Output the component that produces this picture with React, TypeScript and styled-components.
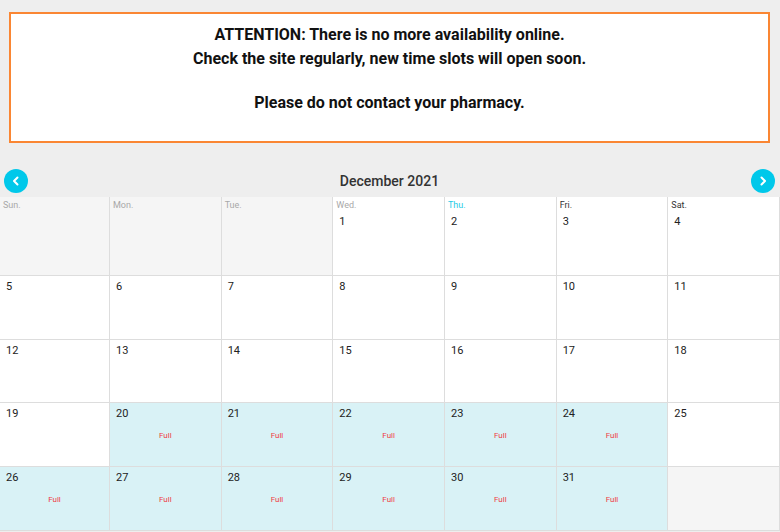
import styled, { createGlobalStyle } from 'styled-components';

const GlobalStyle = createGlobalStyle`
  html, body {
    margin: 0;
    padding: 0;
    background: #eeeeee;
    font-family: Roboto, "Liberation Sans", Arial, sans-serif;
  }
`;

const Page = styled.div`
  width: 780px;
  height: 532px;
  overflow: hidden;
  background: #eeeeee;
`;

const Alert = styled.div`
  margin: 12px 10px 0 9px;
  border: 2px solid #fa8633;
  background: #ffffff;
  padding: 9px 0 26px;
  text-align: center;
  font-size: 16px;
  font-weight: 700;
  color: #111111;
  line-height: 23.5px;
`;

const AlertLine = styled.div<{ $gap?: number }>`
  margin-top: ${(p) => p.$gap ?? 0}px;
`;

const CalHeader = styled.div`
  display: flex;
  align-items: center;
  justify-content: space-between;
  margin-top: 25px;
  padding: 1px 5px 4px 4px;
`;

const NavButton = styled.button`
  width: 24px;
  height: 24px;
  border-radius: 50%;
  border: none;
  padding: 0;
  background: #00c8ea;
  display: flex;
  align-items: center;
  justify-content: center;
  cursor: pointer;
`;

const Title = styled.div`
  font-size: 14px;
  font-weight: 500;
  color: #333333;
`;

const Grid = styled.div`
  display: grid;
  grid-template-columns: 109px repeat(6, 1fr);
  grid-template-rows: 78px 63px 62px 63px 63px;
  gap: 1px;
  padding: 0 1px 1px 0;
  background: #dddddd;
`;

type Kind = 'past' | 'open' | 'full' | 'off';

const cellBg: Record<Kind, string> = {
  past: '#f5f5f5',
  open: '#ffffff',
  full: '#d9f2f6',
  off: '#f5f5f5',
};

const Cell = styled.div<{ $kind: Kind }>`
  background: ${(p) => cellBg[p.$kind]};
  display: flex;
  flex-direction: column;
`;

const DayName = styled.div<{ $tone: 'past' | 'today' | 'future' }>`
  font-size: 9px;
  line-height: 14px;
  padding: 1px 3px 0;
  color: ${(p) => (p.$tone === 'past' ? '#a8a8a8' : p.$tone === 'today' ? '#1fcbe6' : '#333333')};
`;

const DateNum = styled.div<{ $top: number }>`
  font-size: 11px;
  line-height: 14px;
  color: #222222;
  padding: ${(p) => p.$top}px 6px 0;
`;

const Full = styled.div`
  margin-top: 10px;
  text-align: center;
  font-size: 8px;
  line-height: 10px;
  color: #ef3d47;
`;

const Chevron = ({ dir }: { dir: 'left' | 'right' }) => (
  <svg width="10" height="10" viewBox="0 0 10 10">
    <polyline
      points={dir === 'left' ? '6.5,1.5 3,5 6.5,8.5' : '3.5,1.5 7,5 3.5,8.5'}
      fill="none"
      stroke="#ffffff"
      strokeWidth="2"
      strokeLinecap="round"
      strokeLinejoin="round"
    />
  </svg>
);

const dayNames = ['Sun.', 'Mon.', 'Tue.', 'Wed.', 'Thu.', 'Fri.', 'Sat.'];
const fullDays = [20, 21, 22, 23, 24, 26, 27, 28, 29, 30, 31];

export default function App() {
  // December 2021 starts on a Wednesday (index 3)
  const cells: (number | null)[] = [];
  for (let i = 0; i < 3; i++) cells.push(null);
  for (let d = 1; d <= 31; d++) cells.push(d);
  while (cells.length < 35) cells.push(null);

  return (
    <Page>
      <GlobalStyle />
      <Alert>
        <AlertLine>ATTENTION: There is no more availability online.</AlertLine>
        <AlertLine>Check the site regularly, new time slots will open soon.</AlertLine>
        <AlertLine $gap={21}>Please do not contact your pharmacy.</AlertLine>
      </Alert>
      <CalHeader>
        <NavButton aria-label="previous">
          <Chevron dir="left" />
        </NavButton>
        <Title>December 2021</Title>
        <NavButton aria-label="next">
          <Chevron dir="right" />
        </NavButton>
      </CalHeader>
      <Grid>
        {cells.map((d, i) => {
          const kind: Kind =
            d === null ? (i < 7 ? 'past' : 'off') : fullDays.includes(d) ? 'full' : 'open';
          const firstRow = i < 7;
          const tone = i < 4 ? 'past' : i === 4 ? 'today' : 'future';
          return (
            <Cell key={i} $kind={kind}>
              {firstRow && <DayName $tone={tone}>{dayNames[i]}</DayName>}
              {d !== null && <DateNum $top={firstRow ? 3 : 4}>{d}</DateNum>}
              {kind === 'full' && <Full>Full</Full>}
            </Cell>
          );
        })}
      </Grid>
    </Page>
  );
}
